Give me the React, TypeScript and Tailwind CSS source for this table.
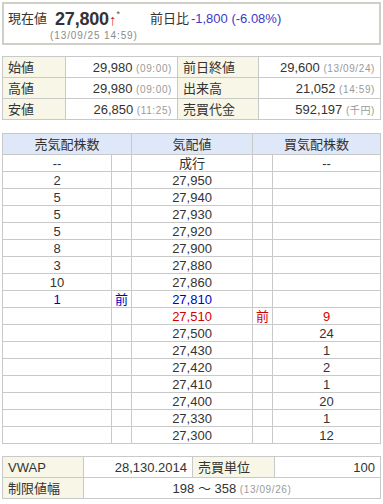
const FONT = "font-['Liberation_Sans','Noto_Sans_CJK_JP',sans-serif]"

type Row = { sell?: string; mark?: 'sell' | 'buy'; price: string; buy?: string; tone?: 'blue' | 'red' }

const BOOK: Row[] = [
  { sell: '--', price: '成行', buy: '--' },
  { sell: '2', price: '27,950' },
  { sell: '5', price: '27,940' },
  { sell: '5', price: '27,930' },
  { sell: '5', price: '27,920' },
  { sell: '8', price: '27,900' },
  { sell: '3', price: '27,880' },
  { sell: '10', price: '27,860' },
  { sell: '1', mark: 'sell', price: '27,810', tone: 'blue' },
  { price: '27,510', mark: 'buy', buy: '9', tone: 'red' },
  { price: '27,500', buy: '24' },
  { price: '27,430', buy: '1' },
  { price: '27,420', buy: '2' },
  { price: '27,410', buy: '1' },
  { price: '27,400', buy: '20' },
  { price: '27,330', buy: '1' },
  { price: '27,300', buy: '12' },
]

const TONE = {
  blue: 'text-[#0000cc]',
  red: 'text-[#d40000]',
}

function Sub({ children }: { children: React.ReactNode }) {
  return <span className="text-[10px] tracking-[0.6px] text-[#9a9a9a]">{children}</span>
}

const cell = 'border border-[#c9c9c9] h-[21px] px-[5px]'
const label = `${cell} bg-[#f8f6e7] text-left`
const value = `${cell} text-right`

export default function App() {
  return (
    <div className={`${FONT} w-[383px] h-[504px] bg-white px-[2px] pt-[2px] text-[13px] text-[#333] leading-none`}>
      <div className="h-[43px] border-2 border-[#cfcfc8]">
        <div className="flex items-end h-[24px]">
          <span className="ml-[4px] text-[13px] mb-[3px]">現在値</span>
          <span className="ml-[8px] text-[18px] font-bold tracking-[-0.2px]">27,800</span>
          <span className="text-[#e02020] text-[15px] font-bold mb-[1px]">↑</span>
          <span className="text-[9px] mb-[9px] text-[#555]">*</span>
          <span className="ml-[30px] mb-[3px]">前日比</span>
          <span className="ml-[2px] mb-[3px] text-[#3b3bc4]">-1,800 (-6.08%)</span>
        </div>
        <p className="pl-[46px] pt-[3px] text-[10px] tracking-[0.9px] text-[#8a8a8a]">(13/09/25 14:59)</p>
      </div>

      <table className="mt-[11px] w-full table-fixed border-collapse">
        <colgroup>
          <col className="w-[63px]" />
          <col className="w-[112px]" />
          <col className="w-[81px]" />
          <col />
        </colgroup>
        <tbody>
          <tr>
            <td className={label}>始値</td>
            <td className={value}>29,980 <Sub>(09:00)</Sub></td>
            <td className={label}>前日終値</td>
            <td className={value}>29,600 <Sub>(13/09/24)</Sub></td>
          </tr>
          <tr>
            <td className={label}>高値</td>
            <td className={value}>29,980 <Sub>(09:00)</Sub></td>
            <td className={label}>出来高</td>
            <td className={value}>21,052 <Sub>(14:59)</Sub></td>
          </tr>
          <tr>
            <td className={label}>安値</td>
            <td className={value}>26,850 <Sub>(11:25)</Sub></td>
            <td className={label}>売買代金</td>
            <td className={value}>592,197 <Sub>(千円)</Sub></td>
          </tr>
        </tbody>
      </table>

      <table className="mt-[13px] w-full table-fixed border-collapse text-center">
        <colgroup>
          <col className="w-[109px]" />
          <col className="w-[20px]" />
          <col className="w-[121px]" />
          <col className="w-[20px]" />
          <col />
        </colgroup>
        <thead>
          <tr className="bg-[#dfe8f8]">
            <th colSpan={2} className="border border-[#c9c9c9] h-[21px] font-normal">売気配株数</th>
            <th className="border border-[#c9c9c9] font-normal">気配値</th>
            <th colSpan={2} className="border border-[#c9c9c9] font-normal">買気配株数</th>
          </tr>
        </thead>
        <tbody>
          {BOOK.map((r, i) => {
            const tone = r.tone ? TONE[r.tone] : ''
            return (
              <tr key={i} className="h-[17px]">
                <td className={`border border-[#c9c9c9] ${tone}`}>{r.sell}</td>
                <td className={`border border-[#c9c9c9] ${tone}`}>{r.mark === 'sell' ? '前' : ''}</td>
                <td className={`border border-[#c9c9c9] ${tone}`}>{r.price}</td>
                <td className={`border border-[#c9c9c9] ${tone}`}>{r.mark === 'buy' ? '前' : ''}</td>
                <td className={`border border-[#c9c9c9] ${tone}`}>{r.buy}</td>
              </tr>
            )
          })}
        </tbody>
      </table>

      <table className="mt-[12px] w-full table-fixed border-collapse">
        <colgroup>
          <col className="w-[81px]" />
          <col className="w-[109px]" />
          <col className="w-[82px]" />
          <col />
        </colgroup>
        <tbody>
          <tr>
            <td className={label}>VWAP</td>
            <td className={value}>28,130.2014</td>
            <td className={label}>売買単位</td>
            <td className={value}>100</td>
          </tr>
          <tr>
            <td className={label}>制限値幅</td>
            <td colSpan={3} className={`${cell} text-center`}>
              198 ～ 358 <Sub>(13/09/26)</Sub>
            </td>
          </tr>
        </tbody>
      </table>
    </div>
  )
}
